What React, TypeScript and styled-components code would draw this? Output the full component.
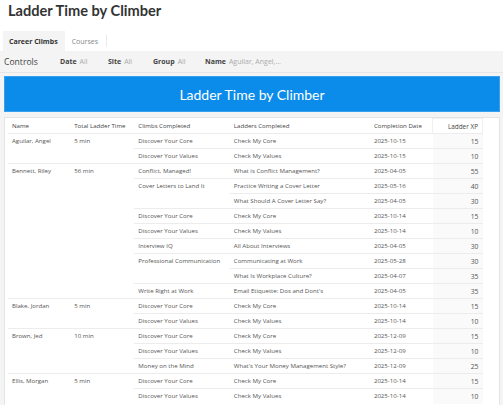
import React from "react";
import styled, { createGlobalStyle } from "styled-components";

const Global = createGlobalStyle`
  html, body { margin: 0; padding: 0; background: #ffffff; }
  body { font-family: "Open Sans", "Liberation Sans", sans-serif; color: #444; }
`;

const Page = styled.div`
  width: 503px;
  height: 405px;
  overflow: hidden;
  display: flex;
  flex-direction: column;
  & > * { flex-shrink: 0; }
`;

const Title = styled.h1`
  margin: 0;
  padding: 2px 8px 0;
  height: 29px;
  box-sizing: border-box;
  font-family: Lato, "Open Sans", sans-serif;
  font-weight: 700;
  font-size: 14.6px;
  line-height: 18px;
  color: #333;
`;

const Tabs = styled.div`
  display: flex;
  align-items: stretch;
  height: 20px;
  margin-top: 2px;
  padding-left: 3px;
`;

const Tab = styled.div<{ $active?: boolean }>`
  display: flex;
  align-items: center;
  padding: ${(p) => (p.$active ? "0 7px 0 6px" : "0 6px 0 7px")};
  background: ${(p) => (p.$active ? "#f4f4f4" : "transparent")};
  font-size: 7px;
  font-weight: ${(p) => (p.$active ? 700 : 400)};
  color: ${(p) => (p.$active ? "#333" : "#888")};
`;

const TabSep = styled.div`
  width: 1px;
  background: #eaeaea;
  margin: 4px 0 4px 2px;
`;

const Body = styled.div`
  flex: 1 1 auto !important;
  min-height: 0;
  overflow: hidden;
  background: #f4f4f4;
  display: flex;
  flex-direction: column;
  & > * { flex-shrink: 0; }
`;

const Controls = styled.div`
  display: flex;
  align-items: center;
  height: 21px;
  padding-left: 4px;
  border-bottom: 1px solid #e6e6e6;
`;

const ControlsLabel = styled.span`
  font-size: 8.6px;
  color: #444;
  width: 56px;
`;

const Filter = styled.span<{ $w: number }>`
  width: ${(p) => p.$w}px;
  font-size: 7px;
  color: #aaa;
  white-space: nowrap;
  b {
    color: #444;
    font-weight: 700;
    margin-right: 3px;
  }
`;

const Banner = styled.div`
  margin: 3px 3px 0 4px;
  height: 36px;
  background: #0b8bea;
  border: 1px solid #3aa0ee;
  box-sizing: border-box;
  display: flex;
  align-items: center;
  justify-content: center;
  color: #fff;
  font-family: Lato, "Open Sans", sans-serif;
  font-size: 14px;
`;

const Card = styled.div`
  margin: 5px 3px 0 4px;
  flex: 1 1 auto !important;
  background: #fff;
  border: 1px solid #e4e4e4;
  border-bottom: none;
  padding: 0 16px 0 3px;
`;

const Table = styled.table`
  width: 100%;
  border-collapse: collapse;
  font-size: 6.1px;
  color: #555;
`;

const Tr = styled.tr`
  height: 15px;
`;

const Th = styled.th<{ $w: number; $xp?: boolean }>`
  width: ${(p) => p.$w}px;
  padding: 0 ${(p) => (p.$xp ? "4px" : "3px")} 0 4px;
  line-height: 13px;
  text-align: ${(p) => (p.$xp ? "right" : "left")};
  font-weight: 400;
  color: #444;
  white-space: nowrap;
  vertical-align: middle;
  ${(p) =>
    p.$xp
      ? "border: 1px solid #f0f0f0; border-bottom: none; font-size: 6.4px;"
      : ""}
`;

const Td = styled.td<{ $xp?: boolean; $top?: boolean }>`
  padding: 1px ${(p) => (p.$xp ? "4px" : "3px")} 1px 4px;
  border-top: 1px solid #ececec;
  vertical-align: ${(p) => (p.$top ? "top" : "middle")};
  line-height: 12px;
  white-space: nowrap;
  text-align: ${(p) => (p.$xp ? "right" : "left")};
  background: ${(p) => (p.$xp ? "#fafafa" : "transparent")};
  font-size: ${(p) => (p.$xp ? "6.8px" : "6.1px")};
  ${(p) => (p.$xp ? "padding-top: 2px; padding-bottom: 0;" : "")}
`;

type Ladder = { ladder: string; date: string; xp: number };
type Climb = { climb: string; ladders: Ladder[] };
type Person = { name: string; time: string; climbs: Climb[] };

const core = (d: string): Climb => ({
  climb: "Discover Your Core",
  ladders: [{ ladder: "Check My Core", date: d, xp: 15 }],
});
const values = (d: string): Climb => ({
  climb: "Discover Your Values",
  ladders: [{ ladder: "Check My Values", date: d, xp: 10 }],
});

const data: Person[] = [
  { name: "Aguilar, Angel", time: "5 min", climbs: [core("2025-10-15"), values("2025-10-15")] },
  {
    name: "Bennett, Riley",
    time: "56 min",
    climbs: [
      { climb: "Conflict, Managed!", ladders: [{ ladder: "What is Conflict Management?", date: "2025-04-05", xp: 55 }] },
      {
        climb: "Cover Letters to Land It",
        ladders: [
          { ladder: "Practice Writing a Cover Letter", date: "2025-05-16", xp: 40 },
          { ladder: "What Should A Cover Letter Say?", date: "2025-04-05", xp: 30 },
        ],
      },
      core("2025-10-14"),
      values("2025-10-14"),
      { climb: "Interview IQ", ladders: [{ ladder: "All About Interviews", date: "2025-04-05", xp: 30 }] },
      {
        climb: "Professional Communication",
        ladders: [
          { ladder: "Communicating at Work", date: "2025-05-28", xp: 30 },
          { ladder: "What Is Workplace Culture?", date: "2025-04-07", xp: 35 },
        ],
      },
      { climb: "Write Right at Work", ladders: [{ ladder: "Email Etiquette: Dos and Dont's", date: "2025-04-05", xp: 35 }] },
    ],
  },
  { name: "Blake, Jordan", time: "5 min", climbs: [core("2025-10-14"), values("2025-10-14")] },
  {
    name: "Brown, Jed",
    time: "10 min",
    climbs: [
      core("2025-12-09"),
      values("2025-12-09"),
      { climb: "Money on the Mind", ladders: [{ ladder: "What's Your Money Management Style?", date: "2025-12-09", xp: 25 }] },
    ],
  },
  { name: "Ellis, Morgan", time: "5 min", climbs: [core("2025-10-14"), values("2025-10-14")] },
];

function renderRows() {
  const rows: React.ReactNode[] = [];
  data.forEach((p) => {
    const total = p.climbs.reduce((s, c) => s + c.ladders.length, 0);
    let first = true;
    p.climbs.forEach((c) => {
      c.ladders.forEach((l, li) => {
        rows.push(
          <Tr key={rows.length}>
            {first && (
              <>
                <Td rowSpan={total} $top>{p.name}</Td>
                <Td rowSpan={total} $top>{p.time}</Td>
              </>
            )}
            {li === 0 && (
              <Td rowSpan={c.ladders.length} $top>{c.climb}</Td>
            )}
            <Td>{l.ladder}</Td>
            <Td>{l.date}</Td>
            <Td $xp>{l.xp}</Td>
          </Tr>
        );
        first = false;
      });
    });
  });
  return rows;
}

export default function App() {
  return (
    <Page>
      <Global />
      <Title>Ladder Time by Climber</Title>
      <Tabs>
        <Tab $active>Career Climbs</Tab>
        <Tab>Courses</Tab>
        <TabSep />
      </Tabs>
      <Body>
        <Controls>
          <ControlsLabel>Controls</ControlsLabel>
          <Filter $w={48}><b>Date</b>All</Filter>
          <Filter $w={45}><b>Site</b>All</Filter>
          <Filter $w={52}><b>Group</b>All</Filter>
          <Filter $w={100}><b>Name</b>Aguilar, Angel,...</Filter>
        </Controls>
        <Banner>Ladder Time by Climber</Banner>
        <Card>
          <Table>
            <thead>
              <Tr>
                <Th $w={66}>Name</Th>
                <Th $w={61}>Total Ladder Time</Th>
                <Th $w={93}>Climbs Completed</Th>
                <Th $w={147}>Ladders Completed</Th>
                <Th $w={60}>Completion Date</Th>
                <Th $w={48} $xp>Ladder XP</Th>
              </Tr>
            </thead>
            <tbody>{renderRows()}</tbody>
          </Table>
        </Card>
      </Body>
    </Page>
  );
}
